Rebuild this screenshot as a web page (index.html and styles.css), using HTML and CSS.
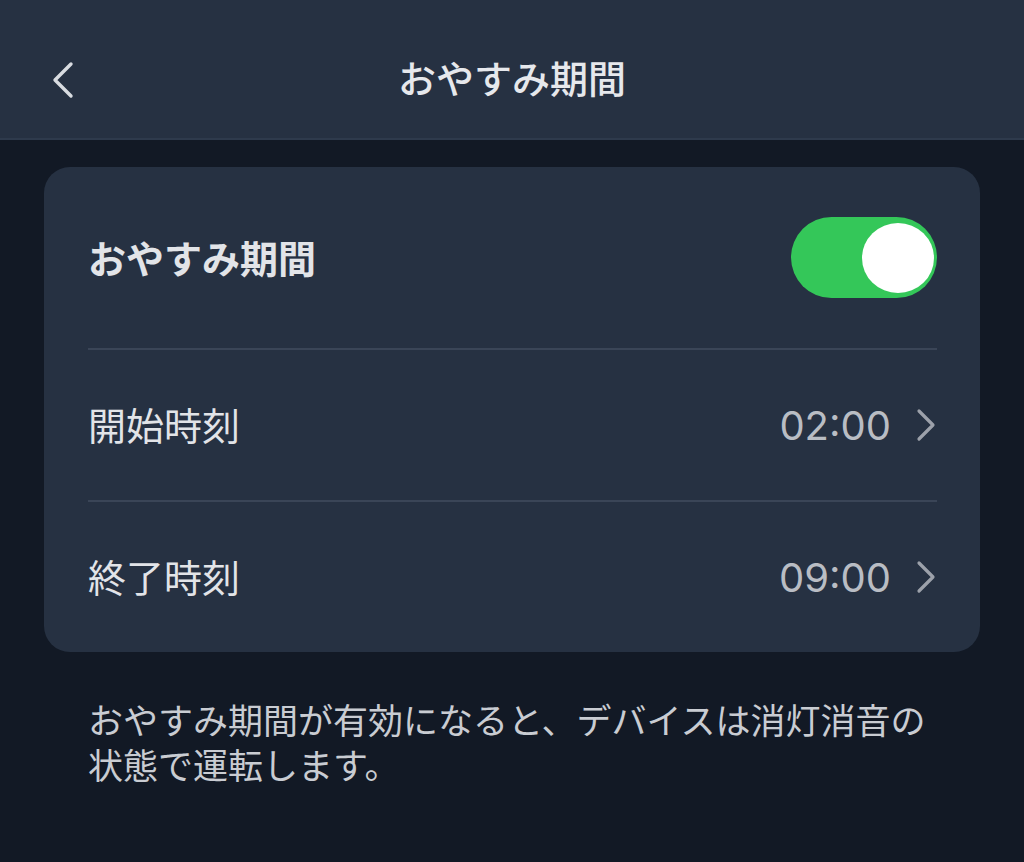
FILE: index.html
```html
<!DOCTYPE html>
<html lang="ja">
<head>
    <meta charset="UTF-8">
    <meta name="viewport" content="width=device-width, initial-scale=1.0">
    <title>おやすみ期間</title>
    <link rel="stylesheet" href="styles.css">
</head>
<body>
    <div class="header">
        <div class="back">
            <svg width="24" height="38" viewBox="0 0 24 38">
                <path d="M20 3 L4 19 L20 35" fill="none" stroke="#d9dce1" stroke-width="3.4" stroke-linecap="round" stroke-linejoin="round"/>
            </svg>
        </div>
        <div class="title">おやすみ期間</div>
    </div>
    <div class="content">
        <div class="card">
            <div class="row row-main">
                <div class="label bold">おやすみ期間</div>
                <div class="toggle on"><div class="knob"></div></div>
            </div>
            <div class="row">
                <div class="label">開始時刻</div>
                <div class="value">02:00
                    <svg class="chev" width="22" height="34" viewBox="0 0 22 34">
                        <path d="M4 3 L18 17 L4 31" fill="none" stroke="#9ca1aa" stroke-width="3.2" stroke-linecap="round" stroke-linejoin="round"/>
                    </svg>
                </div>
            </div>
            <div class="row">
                <div class="label">終了時刻</div>
                <div class="value">09:00
                    <svg class="chev" width="22" height="34" viewBox="0 0 22 34">
                        <path d="M4 3 L18 17 L4 31" fill="none" stroke="#9ca1aa" stroke-width="3.2" stroke-linecap="round" stroke-linejoin="round"/>
                    </svg>
                </div>
            </div>
        </div>
        <div class="note">
            <div class="note-line">おやすみ期間が有効になると、デバイスは消灯消音の</div>
            <div class="note-line">状態で運転します。</div>
        </div>
    </div>
</body>
</html>
```

FILE: styles.css
```css
body {
    margin: 0;
    background-color: #121925;
    color: #e4e6ea;
    font-family: "Noto Sans CJK JP", "Noto Sans", sans-serif;
}
.header {
    height: 138px;
    background-color: #263142;
    border-bottom: 2px solid #2e3a4c;
    display: flex;
    align-items: center;
    justify-content: center;
    position: relative;
}
.back {
    position: absolute;
    left: 51px;
    top: 61px;
    line-height: 0;
}
.title {
    font-size: 38px;
    font-weight: 500;
    color: #e6e8ec;
    margin-top: 14px;
}
.content {
    padding: 27px 44px 0 44px;
}
.card {
    background-color: #263142;
    border-radius: 26px;
    padding: 0 43px 0 44px;
}
.row {
    display: flex;
    align-items: center;
    justify-content: space-between;
    height: 150px;
    border-top: 2px solid #3a4557;
}
.row-main {
    height: 181px;
    border-top: none;
}
.label {
    font-size: 38px;
    color: #e2e4e8;
    margin-top: -3px;
}
.bold {
    font-weight: 700;
}
.value {
    display: flex;
    align-items: center;
    font-family: "Inter", "Noto Sans", sans-serif;
    font-size: 40px;
    color: #b9bdc4;
}
.chev {
    margin-left: 24px;
    margin-right: 0;
}
.toggle {
    width: 146px;
    height: 81px;
    border-radius: 41px;
    background-color: #34c759;
    display: flex;
    align-items: center;
    justify-content: flex-end;
    padding-right: 3px;
    box-sizing: border-box;
}
.knob {
    width: 72px;
    height: 70px;
    border-radius: 50%;
    background-color: #fff;
}
.note {
    margin: 44px 0 0 44px;
    font-size: 35px;
    color: #c9ccd2;
}
.note-line {
    height: 45px;
    line-height: 45px;
    white-space: nowrap;
}
```
